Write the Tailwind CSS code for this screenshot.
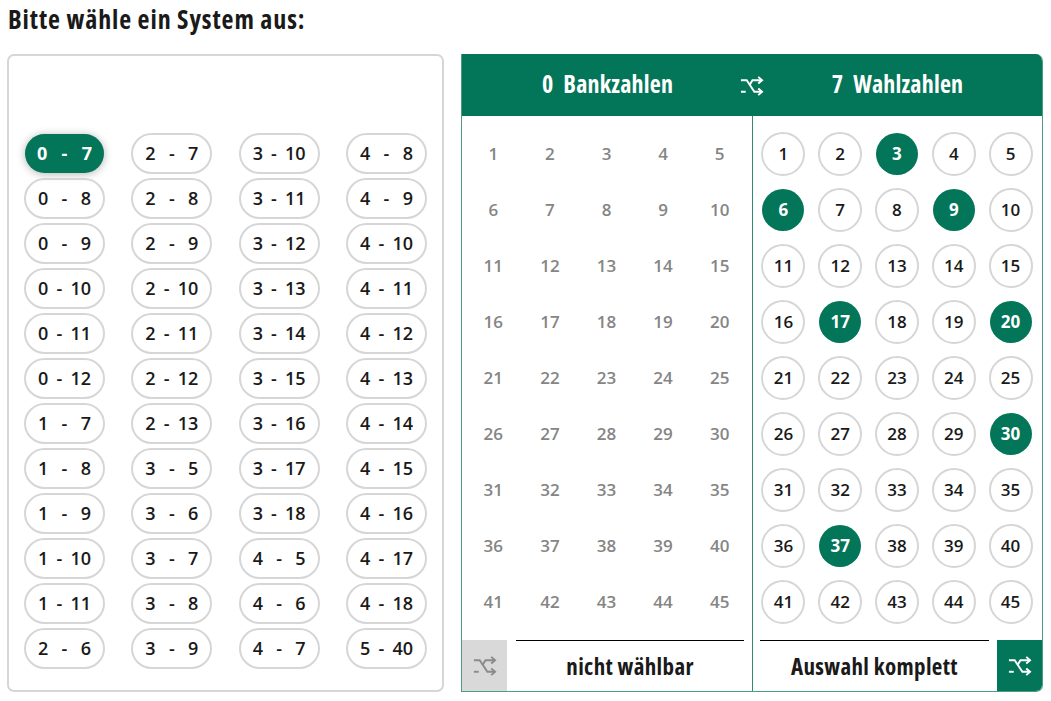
<!DOCTYPE html>
<html lang="de">
<head>
  <meta charset="UTF-8">
  <title>Systemauswahl</title>
  <script src="https://cdn.jsdelivr.net/npm/@tailwindcss/browser@4"></script>
</head>
<body class="bg-white font-['Open_Sans',sans-serif]">
  <div class="w-[1051px] h-[701px] overflow-hidden">
    <h1 class="pl-[8px] pt-[4px] h-[54px] text-[26px] leading-[30px] font-bold font-stretch-[85%] tracking-[0.9px] text-[#1a1a1a]">Bitte wähle ein System aus:</h1>

    <div class="flex pl-[7px] gap-[17px]">
      <!-- System list -->
      <div class="w-[437px] h-[638px] border-2 border-[#d6d6d6] rounded-[7px] pl-[15px] pr-[15px] pt-[77px]">
        <div id="systems" class="grid grid-flow-col grid-rows-[repeat(12,41px)] grid-cols-[repeat(4,81px)] justify-between gap-y-[4px]"></div>
      </div>

      <!-- Number picker -->
      <div class="w-[582px] h-[638px] border border-[#4f9c86] border-t-0 rounded-r-[7px] relative overflow-hidden">
        <div class="flex h-[62px] bg-[#037559] text-white text-[24px] font-bold font-stretch-[85%] tracking-[0.2px]">
          <div class="w-[291px] flex items-center justify-center gap-[10px] pb-[3px]"><span>0</span><span>Bankzahlen</span></div>
          <div class="flex-1 flex items-center justify-center gap-[10px] pb-[3px]"><span>7</span><span>Wahlzahlen</span></div>
        </div>
        <svg class="absolute left-[277px] top-[22px] w-[25px] h-[20px] text-white" viewBox="0 0 26 20" fill="none" stroke="currentColor" stroke-width="2">
          <path d="M2 4H8L16 16H23"/><path d="M2 16H7"/><path d="M11 9L14 4H23"/><path d="M20 0.5L24 4L20 7.5"/><path d="M20 12.5L24 16L20 19.5"/>
        </svg>

        <div class="flex h-[575px]">
          <div class="w-[291px] border-r border-[#2f8a70] flex flex-col">
            <div id="bank" class="grid grid-cols-5 grid-rows-[repeat(9,56px)] pl-[3px] pr-[4px] pt-[10px] h-[524px] text-[17px] font-semibold text-[#858585]"></div>
            <div class="flex h-[51px]">
              <div class="w-[45px] bg-[#d9d9d9] flex items-center justify-center">
                <svg class="w-[25px] h-[20px] text-[#8a8a8a]" viewBox="0 0 26 20" fill="none" stroke="currentColor" stroke-width="2">
                  <path d="M2 4H8L16 16H23"/><path d="M2 16H7"/><path d="M11 9L14 4H23"/><path d="M20 0.5L24 4L20 7.5"/><path d="M20 12.5L24 16L20 19.5"/>
                </svg>
              </div>
              <div class="flex-1 ml-[9px] mr-[8px] border-t border-black flex items-center justify-center text-[23px] font-bold font-stretch-[85%] tracking-[0.35px] text-[#1a1a1a]">nicht wählbar</div>
            </div>
          </div>
          <div class="flex-1 flex flex-col">
            <div id="wahl" class="grid grid-cols-5 grid-rows-[repeat(9,56px)] pl-[2px] pr-[3px] pt-[10px] h-[524px] text-[17px] font-semibold text-[#1a1a1a]"></div>
            <div class="flex h-[51px]">
              <div class="flex-1 ml-[7px] mr-[8px] border-t border-black flex items-center justify-center text-[23px] font-bold font-stretch-[85%] tracking-[0.35px] text-[#1a1a1a]">Auswahl komplett</div>
              <div class="w-[45px] bg-[#037559] flex items-center justify-center">
                <svg class="w-[25px] h-[20px] text-white" viewBox="0 0 26 20" fill="none" stroke="currentColor" stroke-width="2">
                  <path d="M2 4H8L16 16H23"/><path d="M2 16H7"/><path d="M11 9L14 4H23"/><path d="M20 0.5L24 4L20 7.5"/><path d="M20 12.5L24 16L20 19.5"/>
                </svg>
              </div>
            </div>
          </div>
        </div>
      </div>
    </div>
  </div>

  <script>
    const systems = [
      [0,7],[0,8],[0,9],[0,10],[0,11],[0,12],[1,7],[1,8],[1,9],[1,10],[1,11],[2,6],
      [2,7],[2,8],[2,9],[2,10],[2,11],[2,12],[2,13],[3,5],[3,6],[3,7],[3,8],[3,9],
      [3,10],[3,11],[3,12],[3,13],[3,14],[3,15],[3,16],[3,17],[3,18],[4,5],[4,6],[4,7],
      [4,8],[4,9],[4,10],[4,11],[4,12],[4,13],[4,14],[4,15],[4,16],[4,17],[4,18],[5,40]
    ];
    const picked = [3, 6, 9, 17, 20, 30, 37];

    // System pills
    const systemsEl = document.getElementById('systems');
    systems.forEach(([a, b], i) => {
      const pill = document.createElement('div');
      pill.className = i === 0
        ? 'flex items-center justify-between pl-[12px] pr-[12px] pb-[1px] rounded-full bg-[#037559] text-white text-[18px] font-bold m-[1px] shadow-[0_1px_8px_rgba(0,0,0,0.3)]'
        : 'flex items-center justify-between pl-[12px] pr-[12px] pb-[1px] rounded-full border-2 border-[#d6d6d6] text-[#1a1a1a] text-[18px] font-semibold';
      pill.innerHTML = `<span>${a}</span><span>-</span><span>${b}</span>`;
      systemsEl.appendChild(pill);
    });

    // Number grids
    const bankEl = document.getElementById('bank');
    const wahlEl = document.getElementById('wahl');
    for (let n = 1; n <= 45; n++) {
      const bank = document.createElement('div');
      bank.className = 'flex items-center justify-center';
      bank.textContent = n;
      bankEl.appendChild(bank);

      const cell = document.createElement('div');
      cell.className = 'flex items-center justify-center';
      const ball = document.createElement('div');
      ball.className = picked.includes(n)
        ? 'w-[42px] h-[42px] rounded-full bg-[#037559] text-white font-bold flex items-center justify-center'
        : 'w-[44px] h-[44px] rounded-full border-2 border-[#d6d6d6] flex items-center justify-center';
      ball.textContent = n;
      cell.appendChild(ball);
      wahlEl.appendChild(cell);
    }
  </script>
</body>
</html>
